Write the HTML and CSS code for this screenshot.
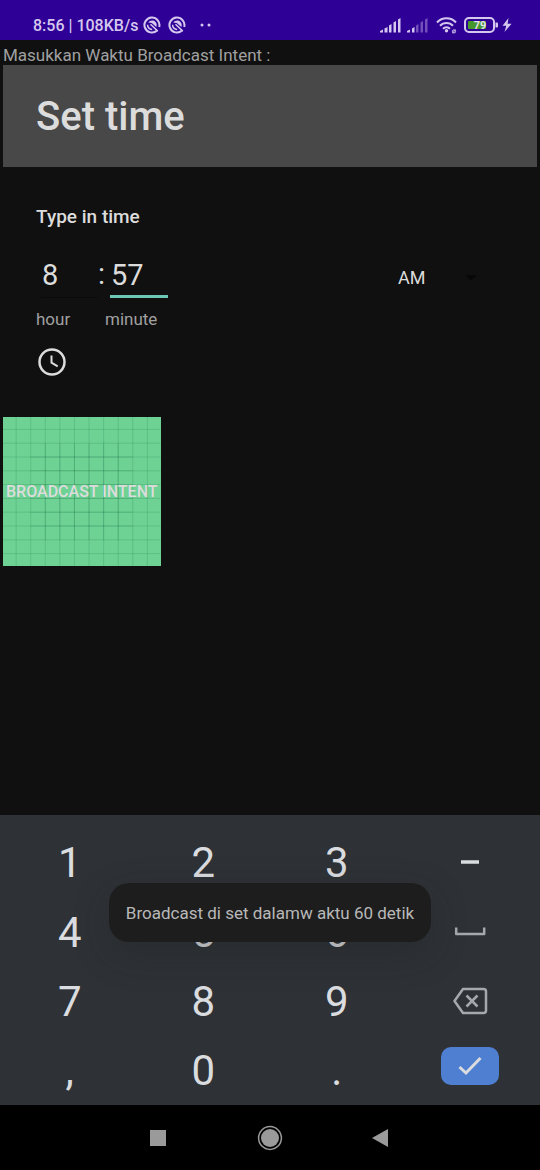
FILE: index.html
```
<!DOCTYPE html>
<html lang="id">
<head>
<meta charset="utf-8">
<meta name="viewport" content="width=device-width, initial-scale=1">
<title>Broadcast Intent</title>
<link rel="stylesheet" href="styles.css">
</head>
<body>
<header class="status">
  <span class="status-text">8:56 | 108KB/s</span>
  <svg class="status-badge" viewBox="0 0 18 18" aria-hidden="true">
    <path class="line" d="M14 14.600A7.500 7.500 0 1 1 16.200 11"/>
    <path class="fill" d="M5.200 6.500C7 4 10.500 3.800 12.500 5.900c1.400 1.500 1.500 3.500.8 5.100L8.800 7z"/>
    <path class="inner" d="M4.600 8.800c-.1 2.700 1.900 4.700 4.600 4.600M7.500 8.300l7.300 6.800"/>
  </svg>
  <svg class="status-badge" viewBox="0 0 18 18" aria-hidden="true">
    <path class="line" d="M14 14.600A7.500 7.500 0 1 1 16.200 11"/>
    <path class="fill" d="M5.200 6.500C7 4 10.500 3.800 12.500 5.900c1.400 1.500 1.500 3.500.8 5.100L8.800 7z"/>
    <path class="inner" d="M4.600 8.800c-.1 2.700 1.900 4.700 4.600 4.600M7.500 8.300l7.300 6.800"/>
  </svg>
  <svg class="status-dots" viewBox="0 0 14 4" aria-hidden="true"><circle class="fill" cx="3" cy="2" r="1.500"/><circle class="fill" cx="10" cy="2" r="1.500"/></svg>
  <div class="status-right">
    <svg class="signal" viewBox="0 0 21 16" aria-hidden="true">
      <path class="fill" d="M0 15.500v-1.500l3-1.500v3zM4.500 11.500l3-1.500v5.500h-3zM9 8.500l2.500-1.500v8.500H9zM13.500 5.500L16 4v11.500h-2.500zM18 2.500L20.500 1v14.500H18z"/>
    </svg>
    <svg class="signal" viewBox="0 0 21 16" aria-hidden="true">
      <path class="fill" d="M0 15.500v-1.500l3-1.500v3zM5 11.500l2.500-1.500v5.500H5z"/>
      <path class="fill dim" d="M9 8.500l2.500-1.500v8.500H9zM13.500 5.500L16 4v11.500h-2.500zM18 2.500L20.500 1v14.500H18z"/>
    </svg>
    <svg class="wifi" viewBox="0 0 22 18" aria-hidden="true">
      <path class="line" d="M1 6.500a13 13 0 0 1 19 0M4 9.800a9 9 0 0 1 13 0M7 12.800a5 5 0 0 1 7 0"/>
      <circle class="fill" cx="10.500" cy="14.700" r="1.700"/>
      <circle class="thin" cx="18" cy="15.400" r="1.600"/>
      <path class="thin" d="M16.300 17l3.400-3.200"/>
    </svg>
    <svg class="battery" viewBox="0 0 34 16" aria-hidden="true">
      <rect class="line" x="1" y="1" width="29" height="14" rx="4"/>
      <rect class="charge" x="4" y="4" width="18" height="8" rx="1"/>
      <path class="fill" d="M31.500 5.500h1.500q1 0 1 1v3q0 1-1 1h-1.500z"/>
      <text class="battery-text" x="16" y="12">79</text>
    </svg>
    <svg class="bolt" viewBox="0 0 10 14" aria-hidden="true"><path class="fill" d="M6.500 0L.5 7.700h3.800L2.500 14l7-8.200H5.600z"/></svg>
  </div>
</header>

<main class="screen">
  <p class="caption">Masukkan Waktu Broadcast Intent :</p>
  <h1 class="title">Set time</h1>
  <section class="picker">
    <h2 class="picker-heading">Type in time</h2>
    <div class="time-row">
      <div class="time-fields">
        <input class="field" id="hour" type="text" inputmode="numeric" value="8">
        <span class="colon">:</span>
        <input class="field field-active" id="minute" type="text" inputmode="numeric" value="57">
        <label class="field-label" for="hour">hour</label>
        <label class="field-label field-label-minute" for="minute">minute</label>
      </div>
      <select class="period" aria-label="AM / PM"><option>AM</option><option>PM</option></select>
      <svg class="period-arrow" viewBox="0 0 12 6" aria-hidden="true"><path d="M0 0h12L6 6z"/></svg>
    </div>
    <button class="clock" type="button" aria-label="Clock">
      <svg class="clock-icon" viewBox="0 0 28 28" aria-hidden="true"><circle cx="14" cy="14" r="12.500"/><path d="M13.500 7.500v7.200l6.200 3.600"/></svg>
    </button>
  </section>
  <button class="broadcast" type="button">
    <svg class="broadcast-grid" viewBox="0 0 108 108" preserveAspectRatio="none" aria-hidden="true">
      <path d="M9 0V108M19 0V108M29 0V108M39 0V108M49 0V108M59 0V108M69 0V108M79 0V108M89 0V108M99 0V108M0 9H108M0 19H108M0 29H108M0 39H108M0 49H108M0 59H108M0 69H108M0 79H108M0 89H108M0 99H108"/>
      <path d="M19 29H89M19 39H89M19 49H89M19 59H89M19 69H89M19 79H89M29 19V89M39 19V89M49 19V89M59 19V89M69 19V89M79 19V89"/>
    </svg>
    <span class="broadcast-text">BROADCAST INTENT</span>
  </button>
</main>

<section class="keypad" aria-label="Keyboard">
  <button class="key" type="button">1</button>
  <button class="key" type="button">2</button>
  <button class="key" type="button">3</button>
  <button class="key" type="button" aria-label="Minus"><svg class="key-icon" viewBox="0 0 36 30"><path class="minus" d="M9 15h18"/></svg></button>
  <button class="key" type="button">4</button>
  <button class="key" type="button">5</button>
  <button class="key" type="button">6</button>
  <button class="key" type="button" aria-label="Space"><svg class="key-icon" viewBox="0 0 36 30"><path d="M4.200 10.500v6.500h28v-6.500"/></svg></button>
  <button class="key" type="button">7</button>
  <button class="key" type="button">8</button>
  <button class="key" type="button">9</button>
  <button class="key" type="button" aria-label="Backspace"><svg class="key-icon" viewBox="0 0 36 30"><path d="M11 2h20.500q2.500 0 2.500 2.500v19q0 2.500-2.500 2.500H11L2.500 14z"/><path d="M14.500 8.500l11 11M25.500 8.500l-11 11"/></svg></button>
  <button class="key" type="button">,</button>
  <button class="key" type="button">0</button>
  <button class="key" type="button">.</button>
  <button class="key key-enter" type="button" aria-label="Done"><span class="enter"><svg class="enter-icon" viewBox="0 0 24 20" aria-hidden="true"><path d="M1.500 11l6.500 6L22.500 2"/></svg></span></button>
  <div class="toast" role="status">Broadcast di set dalamw aktu 60 detik</div>
</section>

<nav class="navbar" aria-label="System">
  <button class="nav-button" type="button" aria-label="Recents"><svg class="nav-icon" viewBox="0 0 26 26"><path class="nav-fill" d="M4 5h16v16H4z"/></svg></button>
  <button class="nav-button" type="button" aria-label="Home"><svg class="nav-icon" viewBox="0 0 26 26"><circle class="nav-ring" cx="13" cy="13" r="11.400"/><circle class="nav-fill" cx="13" cy="13" r="9"/></svg></button>
  <button class="nav-button" type="button" aria-label="Back"><svg class="nav-icon" viewBox="0 0 26 26"><path class="nav-fill" d="M4 13L20 4v18z"/></svg></button>
</nav>
</body>
</html>
```

FILE: styles.css
```
* { box-sizing: border-box; }

body {
  margin: 0;
  min-height: 100vh;
  display: flex;
  flex-direction: column;
  background: #101010;
  color: #dcdcdc;
  font-family: Roboto, "Noto Sans", sans-serif;
}

button, input, select {
  margin: 0;
  padding: 0;
  border: 0;
  border-radius: 0;
  background: none;
  color: inherit;
  font-family: inherit;
}

svg { display: block; flex: none; }

/* Status bar */
.status {
  height: 40px;
  padding: 10px 28px 0 33px;
  display: flex;
  align-items: center;
  background: #2f0096;
  color: #d5c8ee;
}
.status-text { font-size: 16px; font-weight: 500; white-space: pre; }
.status-badge { width: 18px; height: 18px; margin-left: 5px; }
.status-badge + .status-badge { margin-left: 7px; }
.status-dots { width: 14px; height: 4px; margin-left: 13px; }
.status-right { margin-left: auto; display: flex; align-items: center; gap: 6px; }
.status .fill { fill: #d5c8ee; }
.status .dim { opacity: 0.4; }
.status .line { fill: none; stroke: #d5c8ee; stroke-width: 2; }
.status .inner { fill: none; stroke: #d5c8ee; stroke-width: 1.5; }
.status .thin { fill: none; stroke: #d5c8ee; stroke-width: 1; }
.signal { width: 21px; height: 16px; }
.wifi { width: 22px; height: 18px; margin-left: 2px; }
.battery { width: 34px; height: 16px; }
.battery .charge { fill: #45972c; }
.battery-text { fill: #e6e0f0; font-size: 11px; font-weight: 700; text-anchor: middle; }
.bolt { width: 10px; height: 14px; margin-left: -2px; }

/* App content */
.screen { flex: 1; padding: 6px 3px; }
.caption { margin: 0; font-size: 17px; line-height: 19px; color: #a0a0a0; }
.title {
  margin: 0;
  padding: 27px 33px 25px;
  background: #484848;
  font-size: 40px;
  font-weight: 500;
  line-height: 50px;
}
.picker { padding: 39px 33px 0; }
.picker-heading { margin: 0; font-size: 19px; font-weight: 500; line-height: 22px; }
.time-row { margin-top: 27px; display: flex; align-items: flex-start; }
.time-fields {
  display: grid;
  grid-template-columns: 62px 7px 68px;
  row-gap: 10px;
}
.field {
  height: 43px;
  margin-left: 5px;
  padding: 0 0 3px 1px;
  min-width: 0;
  border-bottom: 1px solid #0a0a0a;
  font-size: 29px;
  outline: none;
}
.field-active {
  width: 58px;
  padding: 0 0 1px 1px;
  border-bottom: 3px solid #6dc7b5;
}
.colon { font-size: 29px; line-height: 39px; }
.field-label { font-size: 17px; line-height: 22px; color: #a0a0a0; }
.field-label-minute { grid-column: 3; }
.period {
  margin: 11px 0 0 auto;
  width: 67px;
  height: 24px;
  appearance: none;
  font-size: 18px;
  line-height: 24px;
}
.period-arrow { width: 12px; height: 6px; margin: 20px 27px 0 0; fill: #080808; }
.clock { display: block; margin: 18px 0 0 2px; }
.clock-icon { width: 28px; height: 28px; fill: none; stroke: #dcdcdc; stroke-width: 2.5; }
.clock-icon path { stroke-width: 2; }

.broadcast {
  position: relative;
  display: block;
  margin-top: 41px;
  padding: 0 3px;
  height: 149px;
  background: #6dd294;
}
.broadcast-grid {
  position: absolute;
  inset: 0;
  width: 100%;
  height: 100%;
  fill: none;
  stroke: rgba(10, 80, 45, 0.2);
  stroke-width: 0.5;
}
.broadcast-text { position: relative; font-size: 16px; font-weight: 500; white-space: nowrap; }

/* Keyboard */
.keypad {
  position: relative;
  padding: 12px 3px 0;
  display: grid;
  grid-template-columns: repeat(4, 1fr);
  grid-template-rows: 70px 70px 69px 69px;
  background: #2e3236;
  color: #dadcdf;
}
.key {
  display: flex;
  align-items: center;
  justify-content: center;
  font-size: 42px;
}
.key-icon { width: 36px; height: 30px; fill: none; stroke: #a6a9ac; stroke-width: 2.5; stroke-linejoin: round; }
.key-icon .minus { stroke: #dadcdf; stroke-width: 3.5; }
.key-enter { padding-bottom: 10px; }
.enter {
  width: 58px;
  height: 38px;
  display: flex;
  align-items: center;
  justify-content: center;
  border-radius: 10px;
  background: #4f7fd0;
}
.enter-icon { width: 24px; height: 20px; fill: none; stroke: #dadcdf; stroke-width: 3; }

.toast {
  position: absolute;
  top: 68px;
  left: 0;
  right: 0;
  width: fit-content;
  margin: 0 auto;
  padding: 20px 17px 18px;
  border-radius: 20px;
  background: #1d1d1d;
  box-shadow: 0 12px 36px rgba(30, 30, 30, 0.3);
  color: #b8b8b8;
  font-size: 17px;
  line-height: 21px;
  white-space: nowrap;
}

/* System navigation */
.navbar {
  height: 65px;
  display: flex;
  align-items: center;
  justify-content: center;
  background: #000;
}
.nav-button { width: 111px; height: 48px; display: flex; align-items: center; justify-content: center; }
.nav-icon { width: 26px; height: 26px; }
.nav-fill { fill: #9a9a9a; }
.nav-ring { fill: none; stroke: #9a9a9a; stroke-width: 1.5; }
```
